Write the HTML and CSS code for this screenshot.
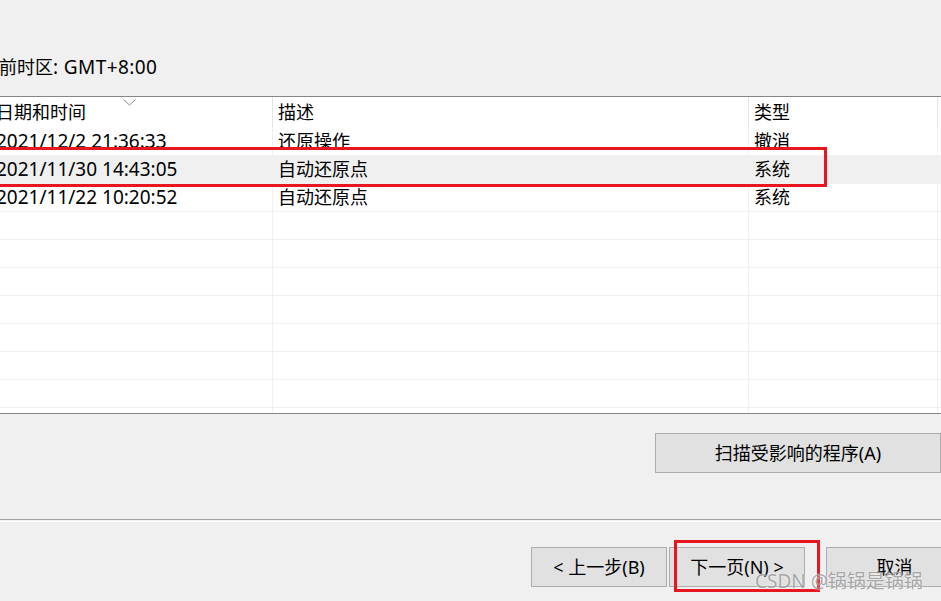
FILE: index.html
```html
<!DOCTYPE html>
<html lang="zh-CN">
<head>
<meta charset="utf-8">
<title>系统还原</title>
<link rel="stylesheet" href="styles.css">
</head>
<body>
<div class="window">
  <div class="tz">当前时区<span class="latin">: GMT+8:00</span></div>

  <div class="list">
    <div class="row head">
      <div class="cell c1">日期和时间
        <svg class="sort" width="13" height="7" viewBox="0 0 13 7"><polyline points="0.5,0.5 6.5,6 12.5,0.5" fill="none" stroke="#8a8a8a" stroke-width="1"/></svg>
      </div>
      <div class="cell">描述</div>
      <div class="cell">类型</div>
      <div class="cell"></div>
    </div>
    <div class="row">
      <div class="cell date">2021/12/2 21:36:33</div>
      <div class="cell">还原操作</div>
      <div class="cell">撤消</div>
      <div class="cell"></div>
    </div>
    <div class="row selected">
      <div class="cell date">2021/11/30 14:43:05</div>
      <div class="cell">自动还原点</div>
      <div class="cell">系统</div>
      <div class="cell"></div>
    </div>
    <div class="row">
      <div class="cell date">2021/11/22 10:20:52</div>
      <div class="cell">自动还原点</div>
      <div class="cell">系统</div>
      <div class="cell"></div>
    </div>
    <div class="row"><div class="cell"></div><div class="cell"></div><div class="cell"></div><div class="cell"></div></div>
    <div class="row"><div class="cell"></div><div class="cell"></div><div class="cell"></div><div class="cell"></div></div>
    <div class="row"><div class="cell"></div><div class="cell"></div><div class="cell"></div><div class="cell"></div></div>
    <div class="row"><div class="cell"></div><div class="cell"></div><div class="cell"></div><div class="cell"></div></div>
    <div class="row"><div class="cell"></div><div class="cell"></div><div class="cell"></div><div class="cell"></div></div>
    <div class="row"><div class="cell"></div><div class="cell"></div><div class="cell"></div><div class="cell"></div></div>
    <div class="row"><div class="cell"></div><div class="cell"></div><div class="cell"></div><div class="cell"></div></div>
    <div class="row"><div class="cell"></div><div class="cell"></div><div class="cell"></div><div class="cell"></div></div>
  </div>

  <div class="scan-row">
    <button class="btn scan">扫描受影响的程序(A)</button>
  </div>

  <div class="separator"></div>

  <div class="nav-row">
    <button class="btn back">&lt; 上一步(B)</button>
    <button class="btn next">下一页(N) &gt;</button>
    <button class="btn cancel">取消</button>
  </div>

  <div class="mark mark-row"></div>
  <div class="mark mark-next"></div>
  <div class="watermark">CSDN @锅锅是锅锅</div>
</div>
</body>
</html>
```

FILE: styles.css
```css
html, body {
  margin: 0;
  padding: 0;
  background: #f0f0f0;
}

.window {
  position: relative;
  width: 941px;
  height: 601px;
  overflow: hidden;
  background: #f0f0f0;
  font-family: "Noto Sans", "Noto Sans CJK SC", "Microsoft YaHei", sans-serif;
  font-size: 18px;
  color: #000;
}

.tz {
  margin: 53px 0 0 -19px;
  height: 28px;
  line-height: 28px;
  white-space: nowrap;
}

.latin {
  font-size: 19px;
  letter-spacing: 0.4px;
}

.list {
  margin: 15px 0 0 -9px;
  width: 980px;
  height: 316px;
  border-top: 1px solid #868686;
  border-bottom: 1px solid #868686;
  background: #fff;
  overflow: hidden;
}

.row {
  display: grid;
  grid-template-columns: 282px 476px 189px 1fr;
  height: 27px;
  border-bottom: 1px solid #f0f0f0;
}

.row.head {
  height: 31px;
  border-bottom: none;
}

.row.selected {
  background: #f0f0f0;
}

.cell {
  padding-left: 5px;
  line-height: 27px;
  border-right: 1px solid #f0f0f0;
  white-space: nowrap;
  overflow: hidden;
}

.cell.date {
  font-size: 19px;
}

.head .cell {
  line-height: 31px;
  border-right-color: #e5e5e5;
}

.head .c1 {
  position: relative;
}

.sort {
  position: absolute;
  left: 132px;
  top: 2px;
}

.btn {
  font-family: inherit;
  font-size: 18px;
  color: #000;
  background: #e1e1e1;
  border: 1px solid #adadad;
  height: 40px;
  padding: 0;
  margin: 0;
  line-height: 38px;
  text-align: center;
}

.scan-row {
  display: flex;
  margin-top: 19px;
  padding-left: 655px;
}

.scan {
  width: 286px;
  flex: none;
}

.separator {
  margin-top: 46px;
  height: 1px;
  border-top: 1px solid #a0a0a0;
  border-bottom: 1px solid #ffffff;
}

.nav-row {
  display: flex;
  margin-top: 25px;
  padding-left: 531px;
}

.back {
  width: 136px;
  flex: none;
  margin-right: 2px;
}

.next {
  width: 136px;
  flex: none;
  margin-right: 21px;
}

.cancel {
  width: 137px;
  flex: none;
}

.mark {
  position: absolute;
  border: 3px solid #e8161f;
  box-sizing: border-box;
}

.mark-row {
  left: -10px;
  top: 147px;
  width: 837px;
  height: 40px;
}

.mark-next {
  left: 674px;
  top: 540px;
  width: 146px;
  height: 52px;
}

.watermark {
  position: absolute;
  left: 755px;
  top: 568px;
  line-height: 26px;
  font-size: 19px;
  white-space: nowrap;
  color: rgba(140, 140, 140, 0.75);
  text-shadow: 0 0 2px rgba(255, 255, 255, 0.9);
}
```
